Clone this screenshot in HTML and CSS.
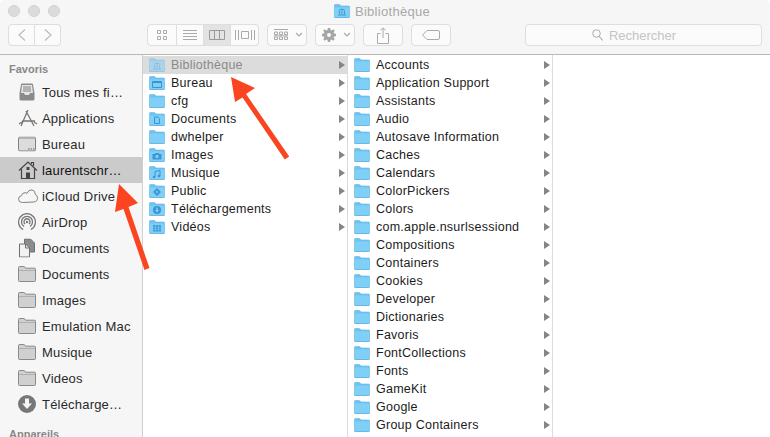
FILE: index.html
```html
<!DOCTYPE html>
<html lang="fr">
<head>
<meta charset="utf-8">
<title>Bibliothèque</title>
<link rel="stylesheet" href="styles.css">
</head>
<body>
<svg class="defs" width="0" height="0" aria-hidden="true">
  <symbol id="f" viewBox="0 0 16 14">
    <path d="M.5 2.500V1.200q0-.7.7-.7h4.100q.5 0 .8.4l.9 1.100h7.800q.7 0 .7.7v10.100q0 .7-.7.7H1.200q-.7 0-.7-.7z" fill="#6cc3f2" stroke="#62b6e6" stroke-width=".6"/>
    <path d="M.8 3.400h14.400v9.600H.8z" fill="#80cff7"/>
    <path d="M.5 13h15v.6H.5z" fill="#5aaee0"/>
  </symbol>
  <symbol id="g" viewBox="0 0 18 16">
    <path d="M.5 3V1.500q0-1 1-1h4.400q.5 0 .8.4l1 1.300h8.800q1 0 1 1v11.300q0 1-1 1H1.500q-1 0-1-1z" fill="#d0d0d0" stroke="#808080" stroke-width=".9"/>
    <path d="M.7 4h16.600" stroke="#808080" stroke-width=".8"/>
    <path d="M1 3.200h16v.5H1z" fill="#f0f0f0"/>
  </symbol>
</svg>
<div class="window">
  <header class="toolbar">
    <div class="titlebar">
      <div class="lights"><i></i><i></i><i></i></div>
      <div class="title">
        <svg class="title-ic" width="16" height="14"><use href="#f"/><path d="M4 6.300 8 4.600l4 1.700zM5 7h1v3H5zm2.500 0h1v3h-1zM10 7h1v3h-1zM4 10.500h8v1H4z" fill="#3d97d0"/></svg>
        <span>Bibliothèque</span>
      </div>
    </div>
    <div class="tools">
      <div class="btn-group nav">
        <button class="btn"><svg width="10" height="14"><path d="M8 1.500 2 7l6 5.500" fill="none" stroke="#bbb" stroke-width="1.200"/></svg></button>
        <button class="btn"><svg width="10" height="14"><path d="m2 1.500 6 5.500-6 5.500" fill="none" stroke="#bbb" stroke-width="1.200"/></svg></button>
      </div>
      <div class="btn-group views">
        <button class="btn"><svg width="12" height="12"><path d="M1.500 1.500h3v3h-3zm6 0h3v3h-3zm-6 6h3v3h-3zm6 0h3v3h-3z" fill="none" stroke="#aaa"/></svg></button>
        <button class="btn"><svg width="16" height="12"><path d="M1 1.500h14M1 4.500h14M1 7.500h14M1 10.500h14" stroke="#aaa"/></svg></button>
        <button class="btn on"><svg width="18" height="12"><path d="M1.500 1.500h15v9h-15zm5 0v9m5-9v9" fill="none" stroke="#999"/></svg></button>
        <button class="btn"><svg width="20" height="12"><path d="M6.500 2.500h7v7h-7zM.500 1v10M3.500 1v10M16.500 1v10M19.500 1v10" fill="none" stroke="#aaa"/></svg></button>
      </div>
      <button class="btn single arrange">
        <svg width="14" height="12"><path d="M0 .500h14M.500 3h3v2.500h-3zm5 0h3v2.500h-3zm5 0h3v2.500h-3zM.500 8h3v2.500h-3zm5 0h3v2.500h-3zm5 0h3v2.500h-3zM0 6.800h14" fill="none" stroke="#aaa"/></svg>
        <svg width="8" height="6"><path d="m1 1 3 3 3-3" fill="none" stroke="#aaa" stroke-width="1.100"/></svg>
      </button>
      <button class="btn single action">
        <svg width="14" height="14"><path d="M5.800 0h2.400l.3 1.900 1.200.5L11.300 1.300 12.700 2.700 11.600 4.300l.5 1.200L14 5.800v2.400l-1.900.3-.5 1.200 1.100 1.600-1.400 1.400-1.600-1.100-1.200.5L8.200 14H5.800l-.3-1.900-1.200-.5-1.600 1.100-1.400-1.400 1.100-1.600-.5-1.200L0 8.200V5.800l1.900-.3.5-1.200-1.100-1.600 1.400-1.400 1.600 1.100 1.200-.5zM7 5a2 2 0 1 0 0 4 2 2 0 0 0 0-4z" fill="#a5a5a5" fill-rule="evenodd"/></svg>
        <svg width="8" height="6"><path d="m1 1 3 3 3-3" fill="none" stroke="#aaa" stroke-width="1.100"/></svg>
      </button>
      <button class="btn single share"><svg width="12" height="17"><path d="M3.500 6.500h-3v10h11v-10h-3M6 11V1M3.500 3.300 6 .8l2.500 2.500" fill="none" stroke="#aaa"/></svg></button>
      <button class="btn single tag"><svg width="18" height="10"><path d="M5 .500h11q1.500 0 1.500 1.500v6q0 1.500-1.500 1.500H5L.500 5z" fill="none" stroke="#aaa"/></svg></button>
      <div class="search">
        <svg width="11" height="12"><circle cx="4.500" cy="4.500" r="3.800" fill="none" stroke="#aaa"/><path d="m7.200 7.500 3.500 4" stroke="#aaa" stroke-width="1.100"/></svg>
        <span>Rechercher</span>
      </div>
    </div>
  </header>

  <main class="panes">
    <aside class="sidebar">
      <h2>Favoris</h2>
      <ul>
        <li><svg class="si" width="18" height="18" viewBox="0 0 18 18"><path d="M1.500 10 3 1.500q.2-1 1-1h10q.8 0 1 1l1.500 8.500v6q0 1.500-1.500 1.500H3q-1.500 0-1.500-1.500z" fill="#8a8a8a"/><path d="M4 2h10l1 8h-3l-1 2H7l-1-2H3z" fill="#e6e6e6"/><path d="M5 4h8M5 6h8M4.800 8h8.400" stroke="#808080"/></svg>Tous mes fi…</li>
        <li><svg class="si" width="20" height="20" viewBox="0 0 20 20"><path d="M10 2 3 18M8 3l8 15M4 13h13M1 16l3-2M19 16l-3-2" fill="none" stroke="#777" stroke-width="1.300"/></svg>Applications</li>
        <li><svg class="si" width="18" height="15" viewBox="0 0 18 15"><rect x=".5" y=".5" width="17" height="14" rx="1.500" fill="#dcdcdc" stroke="#808080"/><path d="M1 1h16v1.500H1z" fill="#b5b5b5"/><path d="M10 12h1.500v1H10zm2.500 0H14v1h-1.500zm2.500 0h1.500v1H15z" fill="#666"/></svg>Bureau</li>
        <li class="sel"><svg class="si" width="20" height="18" viewBox="0 0 20 18"><path d="M1 9.500 10 1l9 8.500M3.500 8v9.500h13V8M13.500 3V1.500h2V5" fill="none" stroke="#444" stroke-width="1.200"/><path d="M8 17v-5.500h4V17zM8.500 6h3v3h-3z" fill="#444"/></svg>laurentschr…</li>
        <li><svg class="si" width="20" height="14" viewBox="0 0 20 14"><path d="M4.500 13.500q-4 0-4-3.300 0-3 3-3.500 .5-3 3.500-3 1 0 2 .7 1.500-4 5-3.500 3.500.6 3.300 4.500 2.200 1 2.200 3.300 0 4.300-4 4.300z" fill="#f6f6f6" stroke="#808080"/></svg>iCloud Drive</li>
        <li><svg class="si" width="18" height="18" viewBox="0 0 18 18"><g fill="none" stroke="#777" stroke-width="1.300"><path d="M5.200 16.500a8.400 8.400 0 1 1 7.600 0"/><path d="M6 13.500a5.500 5.500 0 1 1 6 0"/><path d="M7 11a3 3 0 1 1 4 0"/></g><circle cx="9" cy="9" r="1.200" fill="#777"/></svg>AirDrop</li>
        <li><svg class="si" width="18" height="19" viewBox="0 0 18 19"><path d="M6.500.5h6l4 4v9h-10z" fill="#8c8c8c" stroke="#707070"/><path d="M1.500 5.500h6l4 4v9h-10z" fill="#f2f2f2" stroke="#707070"/><path d="M7.500 5.500v4h4" fill="none" stroke="#707070"/></svg>Documents</li>
        <li><svg class="si" width="18" height="16"><use href="#g"/></svg>Documents</li>
        <li><svg class="si" width="18" height="16"><use href="#g"/></svg>Images</li>
        <li><svg class="si" width="18" height="16"><use href="#g"/></svg>Emulation Mac</li>
        <li><svg class="si" width="18" height="16"><use href="#g"/></svg>Musique</li>
        <li><svg class="si" width="18" height="16"><use href="#g"/></svg>Videos</li>
        <li><svg class="si" width="18" height="18" viewBox="0 0 18 18"><circle cx="9" cy="9" r="9" fill="#777"/><path d="M7 3.500h4v5h3L9 14 4 8.500h3z" fill="#f5f5f5"/></svg>Télécharge…</li>
      </ul>
      <h2 class="devices">Appareils</h2>
    </aside>

    <section class="col one">
      <div class="row hl"><svg class="fi dim" width="16" height="14"><use href="#f"/><path d="M4 6.300 8 4.600l4 1.700zM5 7h1v3H5zm2.500 0h1v3h-1zM10 7h1v3h-1zM4 10.500h8v1H4z" fill="#4ba4dc"/></svg><span>Bibliothèque</span><b></b></div>
      <div class="row"><svg class="fi" width="16" height="14"><use href="#f"/><path d="M3.500 5.500h9v6h-9zM4 6.500h8" fill="none" stroke="#3a94d2"/></svg><span>Bureau</span><b></b></div>
      <div class="row"><svg class="fi" width="16" height="14"><use href="#f"/></svg><span>cfg</span><b></b></div>
      <div class="row"><svg class="fi" width="16" height="14"><use href="#f"/><path d="M5.500 5h3.500l1.500 1.500v5h-5z" fill="none" stroke="#3a94d2"/></svg><span>Documents</span><b></b></div>
      <div class="row"><svg class="fi" width="16" height="14"><use href="#f"/></svg><span>dwhelper</span><b></b></div>
      <div class="row"><svg class="fi" width="16" height="14"><use href="#f"/><path d="M3.500 6h2l1-1h3l1 1h2v5.500h-9z" fill="#3d97d6"/><circle cx="8" cy="8.500" r="1.700" fill="#80cff7"/></svg><span>Images</span><b></b></div>
      <div class="row"><svg class="fi" width="16" height="14"><use href="#f"/><path d="M6 11V5.500l5-1V10" fill="none" stroke="#3a94d2"/><circle cx="5" cy="11" r="1.200" fill="#3a94d2"/><circle cx="10" cy="10" r="1.200" fill="#3a94d2"/></svg><span>Musique</span><b></b></div>
      <div class="row"><svg class="fi" width="16" height="14"><use href="#f"/><path d="m8 4 4 4-4 4-4-4z" fill="#3d97d6"/><circle cx="8" cy="8" r="1" fill="#80cff7"/></svg><span>Public</span><b></b></div>
      <div class="row"><svg class="fi" width="16" height="14"><use href="#f"/><circle cx="8" cy="8" r="4" fill="#3a94d2"/><path d="M7.200 5.500h1.600V8h1.400L8 10.500 5.800 8h1.400z" fill="#80cff7"/></svg><span>Téléchargements</span><b></b></div>
      <div class="row"><svg class="fi" width="16" height="14"><use href="#f"/><path d="M4 5h8v6.500H4z" fill="#3d97d6"/><path d="M6.500 5v6.500M9.500 5v6.500M4 7.200h8M4 9.300h8" stroke="#80cff7" stroke-width=".6"/></svg><span>Vidéos</span><b></b></div>
    </section>

    <section class="col two">
      <div class="row"><svg class="fi" width="16" height="14"><use href="#f"/></svg><span>Accounts</span><b></b></div>
      <div class="row"><svg class="fi" width="16" height="14"><use href="#f"/></svg><span>Application Support</span><b></b></div>
      <div class="row"><svg class="fi" width="16" height="14"><use href="#f"/></svg><span>Assistants</span><b></b></div>
      <div class="row"><svg class="fi" width="16" height="14"><use href="#f"/></svg><span>Audio</span><b></b></div>
      <div class="row"><svg class="fi" width="16" height="14"><use href="#f"/></svg><span>Autosave Information</span><b></b></div>
      <div class="row"><svg class="fi" width="16" height="14"><use href="#f"/></svg><span>Caches</span><b></b></div>
      <div class="row"><svg class="fi" width="16" height="14"><use href="#f"/></svg><span>Calendars</span><b></b></div>
      <div class="row"><svg class="fi" width="16" height="14"><use href="#f"/></svg><span>ColorPickers</span><b></b></div>
      <div class="row"><svg class="fi" width="16" height="14"><use href="#f"/></svg><span>Colors</span><b></b></div>
      <div class="row"><svg class="fi" width="16" height="14"><use href="#f"/></svg><span>com.apple.nsurlsessiond</span><b></b></div>
      <div class="row"><svg class="fi" width="16" height="14"><use href="#f"/></svg><span>Compositions</span><b></b></div>
      <div class="row"><svg class="fi" width="16" height="14"><use href="#f"/></svg><span>Containers</span><b></b></div>
      <div class="row"><svg class="fi" width="16" height="14"><use href="#f"/></svg><span>Cookies</span><b></b></div>
      <div class="row"><svg class="fi" width="16" height="14"><use href="#f"/></svg><span>Developer</span><b></b></div>
      <div class="row"><svg class="fi" width="16" height="14"><use href="#f"/></svg><span>Dictionaries</span><b></b></div>
      <div class="row"><svg class="fi" width="16" height="14"><use href="#f"/></svg><span>Favoris</span><b></b></div>
      <div class="row"><svg class="fi" width="16" height="14"><use href="#f"/></svg><span>FontCollections</span><b></b></div>
      <div class="row"><svg class="fi" width="16" height="14"><use href="#f"/></svg><span>Fonts</span><b></b></div>
      <div class="row"><svg class="fi" width="16" height="14"><use href="#f"/></svg><span>GameKit</span><b></b></div>
      <div class="row"><svg class="fi" width="16" height="14"><use href="#f"/></svg><span>Google</span><b></b></div>
      <div class="row"><svg class="fi" width="16" height="14"><use href="#f"/></svg><span>Group Containers</span><b></b></div>
    </section>
    <section class="col three"></section>
  </main>

  <svg class="arrows" width="770" height="437" viewBox="0 0 770 437" aria-hidden="true">
    <path d="M231 77 255 88 246 94 289.200 156.500 284.800 159.500 242.500 97.500 235 102zM119 184 138 203 128.500 207 149.500 268 144.500 270 123.500 209 115 212z" fill="#fb4520" stroke-linejoin="round"/>
  </svg>
</div>
</body>
</html>
```

FILE: styles.css
```css
* { box-sizing: border-box; }
html, body { margin: 0; padding: 0; }
body {
  width: 770px;
  height: 437px;
  overflow: hidden;
  background: #fff;
  font-family: "Liberation Sans", Arial, sans-serif;
  color: #1c1c1c;
}
.defs { position: absolute; }
.window {
  position: relative;
  width: 770px;
  height: 437px;
  overflow: hidden;
  display: flex;
  flex-direction: column;
}
.toolbar {
  height: 55px;
  flex: none;
  background: #f6f6f6;
  border-bottom: 1px solid #b8b8b8;
  border-radius: 5px 5px 0 0;
}
.titlebar {
  height: 24px;
  display: flex;
  align-items: center;
  justify-content: center;
  position: relative;
}
.lights {
  position: absolute;
  left: 8px;
  top: 5px;
  display: flex;
  gap: 8px;
}
.lights i {
  width: 12px;
  height: 12px;
  border-radius: 50%;
  background: #dcdcdc;
  border: 1px solid #d0d0d0;
}
.title {
  display: flex;
  align-items: center;
  gap: 5px;
  margin-bottom: 2px;
  margin-right: 6px;
  font-size: 13px;
  letter-spacing: .3px;
  color: #a8a8a8;
}
.tools {
  display: flex;
  align-items: flex-start;
  padding-left: 8px;
}
button { font: inherit; margin: 0; padding: 0; }
.btn {
  height: 22px;
  background: #fbfbfb;
  border: 1px solid #dedede;
  display: flex;
  align-items: center;
  justify-content: center;
}
.btn-group { display: flex; }
.btn-group .btn { border-left-width: 0; }
.btn-group .btn:first-child { border-left-width: 1px; border-radius: 4px 0 0 4px; }
.btn-group .btn:last-child { border-radius: 0 4px 4px 0; }
.nav .btn { width: 26px; }
.nav .btn:first-child { width: 27px; }
.views { margin-left: 86px; }
.views .btn { width: 27px; }
.views .btn:first-child { width: 30px; }
.views .btn:last-child { width: 28px; }
.btn.on { background: #e3e3e3; }
.single { border-radius: 4px; }
.arrange, .action {
  width: 40px;
  margin-left: 8px;
  padding-left: 6px;
  justify-content: flex-start;
  gap: 7px;
}
.share { width: 40px; margin-left: 8px; }
.tag { width: 40px; margin-left: 8px; }
.search {
  width: 237px;
  height: 22px;
  margin-left: 74px;
  padding-right: 19px;
  background: #fbfbfb;
  border: 1px solid #dedede;
  border-radius: 4px;
  display: flex;
  align-items: center;
  justify-content: center;
  gap: 6px;
  font-size: 13px;
  color: #c4c4c4;
}
.panes { flex: 1; display: flex; min-height: 0; }
.sidebar {
  width: 143px;
  flex: none;
  background: #f6f6f6;
  border-right: 1px solid #cfcfcf;
  font-size: 13px;
  letter-spacing: .2px;
  color: #2a2a2a;
}
.sidebar h2 {
  margin: 0;
  padding: 8px 0 0 9px;
  height: 24px;
  font-size: 11px;
  line-height: 13px;
  font-weight: bold;
  letter-spacing: 0;
  color: #888;
}
.sidebar h2.devices { padding-top: 11px; height: 26px; }
.sidebar ul { margin: 0; padding: 0; list-style: none; }
.sidebar li {
  height: 26px;
  padding-left: 42px;
  display: flex;
  align-items: center;
  position: relative;
  white-space: nowrap;
}
.sidebar li.sel { background: #cbcbcb; color: #111; }
.si { position: absolute; left: 18px; top: 50%; transform: translateY(-50%); }
.col {
  width: 205px;
  flex: none;
  padding-top: 1px;
  border-right: 1px solid #dcdcdc;
  background: #fff;
  font-size: 12.5px;
  letter-spacing: .25px;
}
.col.three { flex: 1; border-right: 0; }
.row {
  height: 18px;
  display: flex;
  align-items: center;
  padding-left: 6px;
  white-space: nowrap;
}
.fi { flex: none; margin-right: 6px; }
.row span { flex: 1; }
.row b {
  width: 0;
  height: 0;
  margin-right: 2px;
  border-left: 6px solid #858585;
  border-top: 4px solid transparent;
  border-bottom: 4px solid transparent;
}
.row.hl { background: #dcdcdc; color: #8a8a8a; }
.fi.dim { opacity: .55; }
.arrows { position: absolute; left: 0; top: 0; pointer-events: none; }
```
